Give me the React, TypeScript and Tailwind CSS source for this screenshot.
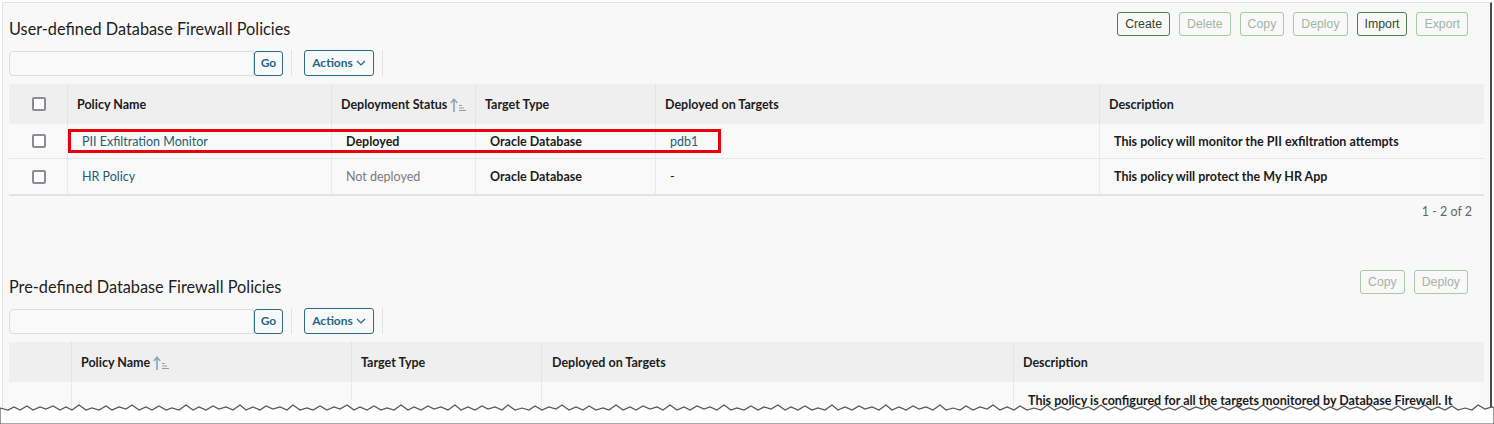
import React from "react";

const font = { fontFamily: "Lato, 'Noto Sans', sans-serif" };

function Checkbox() {
  return <span className="block w-[14px] h-[14px] border-2 border-[#8c8b9a] rounded-[2px] bg-white" />;
}

function SortIcon() {
  return (
    <svg width="18" height="16" viewBox="0 0 18 16" className="ml-[2px] inline-block">
      <path d="M5 15 V2.5" stroke="#8fa0b3" strokeWidth="1.6" fill="none" />
      <path d="M1.8 6 L5 2 L8.2 6" stroke="#8fa0b3" strokeWidth="1.4" fill="none" />
      <path d="M10 8.5 H13 M10 11 H15 M10 13.5 H17" stroke="#9a9aa6" strokeWidth="1" fill="none" />
    </svg>
  );
}

function GreenBtn({ label, enabled }: { label: string; enabled?: boolean }) {
  return (
    <button
      className={
        "h-[24px] px-[7px] rounded-[3px] border text-[12.3px] leading-none bg-[#f8f8f8] " +
        (enabled ? "border-[#4f7c4f] text-[#2c4a2c]" : "border-[#a9c8a9] text-[#a3b5a3]")
      }
      style={{ fontFamily: "'Liberation Sans', Arial, sans-serif" }}
    >
      {label}
    </button>
  );
}

function SearchBar() {
  return (
    <div className="flex items-center h-[26px]">
      <div className="w-[245px] h-[25px] border border-[#dcdcdc] rounded-l-[4px] bg-[#f9f9f9]" />
      <button className="w-[29px] h-[25px] border border-[#2c6b80] rounded-[3px] text-[12px] font-bold text-[#1f6882] bg-[#f9f9f9]">
        Go
      </button>
      <div className="w-px h-[26px] bg-[#e2e2e2] ml-[8px]" />
      <button className="ml-[12px] w-[70px] h-[26px] border border-[#2c6b80] rounded-[3px] text-[12px] font-bold text-[#1f6882] bg-[#f9f9f9] flex items-center justify-center gap-[3px]">
        Actions
        <svg width="10" height="6" viewBox="0 0 10 6">
          <path d="M1 1 L5 5 L9 1" stroke="#1f6882" strokeWidth="1.2" fill="none" />
        </svg>
      </button>
      <div className="w-px h-[26px] bg-[#e2e2e2] ml-[8px]" />
    </div>
  );
}

export default function App() {
  const c1 = "grid-cols-[58px_264px_144px_180px_444px_385px]";
  const c2 = "grid-cols-[62px_280px_190px_472px_471px]";
  const th = "flex items-center pl-[9px] pt-[2px] font-bold text-[12.5px] text-[#1c1c1c] border-l border-[#e3e3e3]";
  const td = "flex items-center pl-[14px] pt-[2px] text-[12.5px] border-l border-[#e9e9e9]";
  return (
    <div className="w-[1494px] h-[424px] bg-white relative overflow-hidden" style={font}>
      <div className="absolute left-[2px] top-[2px] w-[1490px] h-[410px] bg-[#f8f8f8] border-t border-l border-[#e4e4e4] border-r-2 border-r-[#4a4a4a] overflow-hidden">
        <div className="pl-[6px] pr-[4px]">
          {/* Section 1 */}
          <div className="flex justify-between items-start pt-[9px] pr-[18px]">
            <h2 className="text-[16.3px] leading-[22px] mt-[6px] text-[#1e1e1e]">User-defined Database Firewall Policies</h2>
            <div className="flex gap-[9px]">
              <GreenBtn label="Create" enabled />
              <GreenBtn label="Delete" />
              <GreenBtn label="Copy" />
              <GreenBtn label="Deploy" />
              <GreenBtn label="Import" enabled />
              <GreenBtn label="Export" />
            </div>
          </div>
          <div className="mt-[10px]">
            <SearchBar />
          </div>
          <div className="mt-[8px] w-[1475px] relative">
            <div className={"grid h-[40px] bg-[#efefef] " + c1}>
              <div className="flex items-center justify-center pl-[1px]"><Checkbox /></div>
              <div className={th}>Policy Name</div>
              <div className={th}>Deployment Status<SortIcon /></div>
              <div className={th}>Target Type</div>
              <div className={th}>Deployed on Targets</div>
              <div className={th}>Description</div>
            </div>
            <div className={"grid h-[35px] border-b border-[#e6e6e6] bg-[#f9f9f9] " + c1}>
              <div className="flex items-center justify-center pl-[1px]"><Checkbox /></div>
              <div className={td + " text-[#235d77]"}>PII Exfiltration Monitor</div>
              <div className={td + " font-bold text-[#1c1c1c]"}>Deployed</div>
              <div className={td + " font-bold text-[#1c1c1c]"}>Oracle Database</div>
              <div className={td + " text-[#235d77]"}>pdb1</div>
              <div className={td + " font-bold text-[#1c1c1c]"}>This policy will monitor the PII exfiltration attempts</div>
            </div>
            <div className={"grid h-[37px] border-b-2 border-[#e3e3e3] bg-[#f9f9f9] " + c1}>
              <div className="flex items-center justify-center pl-[1px]"><Checkbox /></div>
              <div className={td + " text-[#235d77]"}>HR Policy</div>
              <div className={td + " text-[#7a7a7a]"}>Not deployed</div>
              <div className={td + " font-bold text-[#1c1c1c]"}>Oracle Database</div>
              <div className={td + " text-[#1c1c1c]"}>-</div>
              <div className={td + " font-bold text-[#1c1c1c]"}>This policy will protect the My HR App</div>
            </div>
            <div className="absolute left-[59px] top-[45px] w-[653px] h-[24px] border-[3px] border-[#e8000b]" />
          </div>
          <div className="flex justify-end pr-[14px] mt-[8px]">
            <span className="text-[12.5px] leading-[16px] text-[#666]">1 - 2 of 2</span>
          </div>

          {/* Section 2 */}
          <div className="flex justify-between items-start mt-[50px] pr-[18px]">
            <h2 className="text-[16.3px] leading-[22px] mt-[6px] text-[#1e1e1e]">Pre-defined Database Firewall Policies</h2>
            <div className="flex gap-[9px]">
              <GreenBtn label="Copy" />
              <GreenBtn label="Deploy" />
            </div>
          </div>
          <div className="mt-[10px]">
            <SearchBar />
          </div>
          <div className="mt-[8px] w-[1475px]">
            <div className={"grid h-[40px] bg-[#efefef] " + c2}>
              <div />
              <div className={th}>Policy Name<SortIcon /></div>
              <div className={th}>Target Type</div>
              <div className={th + " pl-[10px]"}>Deployed on Targets</div>
              <div className={th}>Description</div>
            </div>
            <div className={"grid h-[80px] bg-[#f9f9f9] " + c2}>
              <div />
              <div className={td} />
              <div className={td} />
              <div className={td} />
              <div className={"pl-[14px] pr-[20px] pt-[10px] text-[12.5px] leading-[17px] font-bold text-[#1c1c1c] border-l border-[#e9e9e9]"}>
                This policy is configured for all the targets monitored by Database Firewall. It
              </div>
            </div>
          </div>
        </div>
      </div>
      {/* torn edge */}
      <svg className="absolute left-0 top-[398px]" width="1494" height="26" viewBox="0 0 1494 26">
        <path
          d="M0 10 L8 12 L14 9 L20 12 L27 8 L33 12 L40 9 L46 11 L53 8 L60 12 L66 9 L72 12 L79 7 L86 12 L92 10 L99 12 L106 8 L112 12 L119 9 L126 11 L132 7 L139 12 L146 9 L152 12 L159 8 L166 12 L172 10 L179 12 L186 7 L193 12 L199 9 L206 12 L213 8 L219 11 L226 9 L233 12 L240 7 L246 12 L253 9 L260 12 L266 8 L273 11 L280 9 L287 12 L293 7 L300 12 L307 10 L313 12 L320 8 L327 12 L334 9 L340 11 L347 7 L354 12 L360 9 L367 12 L374 8 L381 12 L387 10 L394 12 L401 7 L408 12 L414 9 L421 12 L428 8 L434 11 L441 9 L448 12 L455 7 L461 12 L468 9 L475 12 L482 8 L488 11 L495 9 L502 12 L508 7 L515 12 L522 10 L529 12 L535 8 L542 12 L549 9 L556 11 L562 7 L569 12 L576 9 L583 12 L589 8 L596 12 L603 10 L609 12 L616 7 L623 12 L630 9 L636 12 L643 8 L650 11 L657 9 L663 12 L670 7 L677 12 L684 9 L690 12 L697 8 L704 11 L710 9 L717 12 L724 7 L731 12 L737 10 L744 12 L751 8 L758 12 L764 9 L771 11 L778 7 L785 12 L791 9 L798 12 L805 8 L812 12 L818 10 L825 12 L832 7 L838 12 L845 9 L852 12 L859 8 L865 11 L872 9 L879 12 L886 7 L892 12 L899 9 L906 12 L913 8 L919 11 L926 9 L933 12 L940 7 L946 12 L953 10 L960 12 L966 8 L973 12 L980 9 L987 11 L993 7 L1000 12 L1007 9 L1014 12 L1020 8 L1027 12 L1034 10 L1041 12 L1047 7 L1054 12 L1061 9 L1068 12 L1074 8 L1081 11 L1088 9 L1094 12 L1101 7 L1108 12 L1115 9 L1121 12 L1128 8 L1135 11 L1142 9 L1148 12 L1155 7 L1162 12 L1169 10 L1175 12 L1182 8 L1189 12 L1196 9 L1202 11 L1209 7 L1216 12 L1222 9 L1229 12 L1236 8 L1243 12 L1249 10 L1256 12 L1263 7 L1270 12 L1276 9 L1283 12 L1290 8 L1297 11 L1303 9 L1310 12 L1317 7 L1324 12 L1330 9 L1337 12 L1344 8 L1350 11 L1357 9 L1364 12 L1371 7 L1377 12 L1384 10 L1391 12 L1398 8 L1404 12 L1411 9 L1418 11 L1425 7 L1431 12 L1438 9 L1445 12 L1452 8 L1458 12 L1465 10 L1472 12 L1478 7 L1485 11 L1492 9 L1494 10 L1494 26 L0 26 Z"
          fill="#ffffff"
          stroke="#555"
          strokeWidth="1.2"
        />
      </svg>
    </div>
  );
}
